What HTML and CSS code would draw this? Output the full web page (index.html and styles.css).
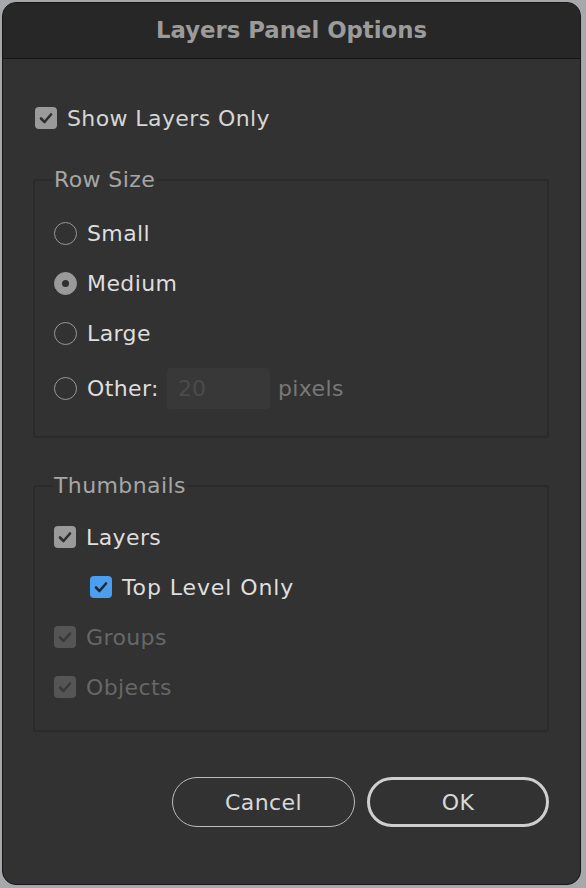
FILE: index.html
```html
<!DOCTYPE html>
<html>
<head>
<meta charset="utf-8">
<link rel="stylesheet" href="styles.css">
</head>
<body>
<div class="window">
  <div class="titlebar">Layers Panel Options</div>
  <div class="content">
    <div class="row top-row">
      <span class="check"><svg viewBox="0 0 22 22"><path d="M6 11.5l3.5 3.5L16 7.5"/></svg></span>
      <span class="label">Show Layers Only</span>
    </div>
    <fieldset class="group rowsize">
      <legend>Row Size</legend>
      <div class="row"><span class="radio"></span><span class="label">Small</span></div>
      <div class="row"><span class="radio on"></span><span class="label">Medium</span></div>
      <div class="row"><span class="radio"></span><span class="label">Large</span></div>
      <div class="row other"><span class="radio"></span><span class="label">Other:</span><span class="field">20</span><span class="unit">pixels</span></div>
    </fieldset>
    <fieldset class="group thumbs">
      <legend>Thumbnails</legend>
      <div class="row"><span class="check"><svg viewBox="0 0 22 22"><path d="M6 11.5l3.5 3.5L16 7.5"/></svg></span><span class="label">Layers</span></div>
      <div class="row indent"><span class="check blue"><svg viewBox="0 0 22 22"><path d="M6 11.5l3.5 3.5L16 7.5"/></svg></span><span class="label">Top Level Only</span></div>
      <div class="row disabled"><span class="check"><svg viewBox="0 0 22 22"><path d="M6 11.5l3.5 3.5L16 7.5"/></svg></span><span class="label">Groups</span></div>
      <div class="row disabled"><span class="check"><svg viewBox="0 0 22 22"><path d="M6 11.5l3.5 3.5L16 7.5"/></svg></span><span class="label">Objects</span></div>
    </fieldset>
    <div class="buttons">
      <button class="btn">Cancel</button>
      <button class="btn ok">OK</button>
    </div>
  </div>
</div>
</body>
</html>
```

FILE: styles.css
```css
html, body {
  margin: 0;
  padding: 0;
}
body {
  background: #a6a8ac;
  width: 586px;
  height: 888px;
  overflow: hidden;
  font-family: "DejaVu Sans", "Liberation Sans", sans-serif;
}
.window {
  margin: 2px 0 0 2px;
  width: 577px;
  height: 881px;
  border: 1px solid #161616;
  border-radius: 14px;
  background: #323232;
  overflow: hidden;
}
.titlebar {
  height: 55px;
  line-height: 54px;
  background: #272727;
  border-bottom: 1px solid #141414;
  text-align: center;
  color: #9b9b9b;
  font-weight: bold;
  font-size: 22.8px;
}
.content {
  padding: 44px 31px 0 30px;
}
.row {
  display: flex;
  align-items: center;
  height: 30px;
}
.top-row {
  padding-left: 2px;
}
.label {
  font-size: 22px;
  letter-spacing: 0.4px;
  color: #dedede;
}
.top-row .label {
  margin-left: 11px;
  color: #d6d6d6;
}
.check {
  width: 22px;
  height: 22px;
  border-radius: 4px;
  background: #9a9a9a;
  display: inline-flex;
  flex: none;
}
.check svg {
  width: 22px;
  height: 22px;
}
.check path {
  fill: none;
  stroke: #2e2e2e;
  stroke-width: 2.6;
  stroke-linecap: round;
  stroke-linejoin: round;
}
.check.blue {
  background: #4c9ff0;
}
.check.blue path {
  stroke: #1f2a38;
}
.disabled .check {
  background: #555555;
}
.disabled .check path {
  stroke: #3a3a3a;
}
.disabled .label {
  color: #676767;
}
.group {
  border: 2px solid #2b2b2b;
  border-radius: 3px;
  padding: 25px 0 27px 19px;
  display: flex;
  flex-direction: column;
  gap: 20px;
  min-width: 0;
}
.group legend {
  font-size: 22px;
  letter-spacing: 0.4px;
  color: #a6a6a6;
  padding: 0 1px;
  margin-left: -1px;
  line-height: 26px;
}
.rowsize {
  margin: 34px 0 0 0;
}
.thumbs {
  margin: 35px 0 0 0;
  padding-top: 23px;
  padding-bottom: 28px;
}
.radio {
  width: 21px;
  height: 21px;
  border: 1.5px solid #999;
  border-radius: 50%;
  flex: none;
  box-sizing: content-box;
}
.radio.on {
  background: #9a9a9a;
  position: relative;
}
.radio.on::after {
  content: "";
  position: absolute;
  left: 7px;
  top: 7px;
  width: 7px;
  height: 7px;
  border-radius: 50%;
  background: #2e2e2e;
}
.row .label {
  margin-left: 10px;
}
.row.other {
  height: 41px;
}
.field {
  margin-left: 8px;
  width: 103px;
  height: 41px;
  background: #383838;
  border-radius: 4px;
  color: #4b4b4b;
  font-size: 22px;
  line-height: 41px;
  padding-left: 11px;
  box-sizing: border-box;
}
.unit {
  margin-left: 8px;
  font-size: 22px;
  letter-spacing: 0.4px;
  color: #787878;
}
.indent {
  padding-left: 36px;
}
.indent .label {
  letter-spacing: 0.9px;
}
.buttons {
  display: flex;
  justify-content: flex-end;
  gap: 12px;
  margin-top: 45px;
}
.btn {
  width: 183px;
  height: 50px;
  border-radius: 25px;
  background: transparent;
  border: 1.5px solid #bdbdbd;
  color: #d8d8d8;
  font-family: "DejaVu Sans", "Liberation Sans", sans-serif;
  font-size: 22px;
  letter-spacing: 0.4px;
  padding: 0;
}
.btn.ok {
  border: 3px solid #cfcfcf;
  width: 182px;
}
```
